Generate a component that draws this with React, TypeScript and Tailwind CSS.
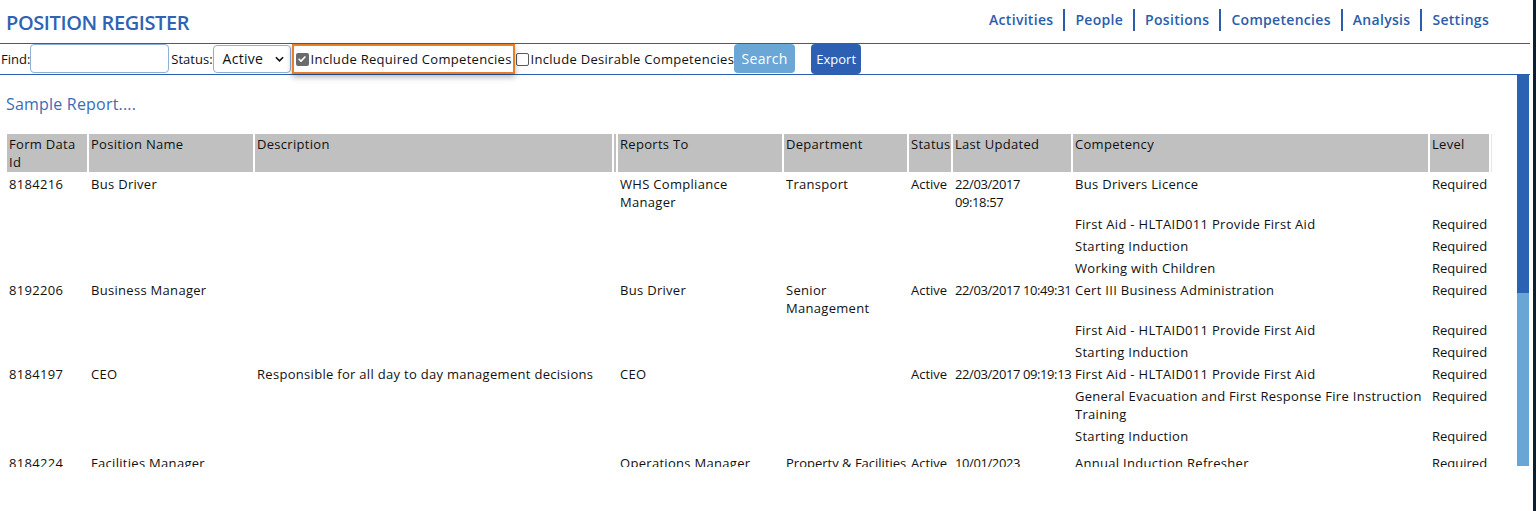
const NAV = ["Activities", "People", "Positions", "Competencies", "Analysis", "Settings"];

type Row = {
  id?: string;
  name?: string;
  desc?: string;
  reports?: string;
  dept?: string;
  status?: string;
  updated?: string[];
  comp: string;
  level: string;
  cls?: string;
};

const ROWS: Row[] = [
  { id: "8184216", name: "Bus Driver", reports: "WHS Compliance Manager", dept: "Transport", status: "Active", updated: ["22/03/2017", "09:18:57"], comp: "Bus Drivers Licence", level: "Required" },
  { comp: "First Aid - HLTAID011 Provide First Aid", level: "Required" },
  { comp: "Starting Induction", level: "Required" },
  { comp: "Working with Children", level: "Required" },
  { id: "8192206", name: "Business Manager", reports: "Bus Driver", dept: "Senior Management", status: "Active", updated: ["22/03/2017 10:49:31"], comp: "Cert III Business Administration", level: "Required" },
  { comp: "First Aid - HLTAID011 Provide First Aid", level: "Required" },
  { comp: "Starting Induction", level: "Required" },
  { id: "8184197", name: "CEO", desc: "Responsible for all day to day management decisions", reports: "CEO", status: "Active", updated: ["22/03/2017 09:19:13"], comp: "First Aid - HLTAID011 Provide First Aid", level: "Required" },
  { comp: "General Evacuation and First Response Fire Instruction Training", level: "Required" },
  { comp: "Starting Induction", level: "Required", cls: "h-[27px]" },
  { id: "8184224", name: "Facilities Manager", reports: "Operations Manager", dept: "Property & Facilities", status: "Active", updated: ["10/01/2023", "09:20:00"], comp: "Annual Induction Refresher", level: "Required" },
  { comp: "Starting Induction", level: "Required" },
];

function Check({ on }: { on: boolean }) {
  if (on) {
    return (
      <span className="w-[13px] h-[13px] rounded-[2px] bg-[#6b6b6b] flex items-center justify-center shrink-0">
        <svg viewBox="0 0 12 12" className="w-[10px] h-[10px]" fill="none" stroke="white" strokeWidth={2} strokeLinecap="round" strokeLinejoin="round">
          <path d="M2.5 6.3l2.3 2.3 4.7-5" />
        </svg>
      </span>
    );
  }
  return <span className="w-[13px] h-[13px] rounded-[2px] border border-[#5a5a5a] bg-white shrink-0" />;
}

export default function App() {
  const td = "px-[2px] pt-[3px] pb-[1px] align-top text-left";
  return (
    <div className="flex w-[1536px] h-[511px] bg-white text-[13px] leading-[18px] tracking-[0.3px] text-[#111]" style={{ fontFamily: '"Open Sans", "Liberation Sans", sans-serif' }}>
      <div className="w-[1530px] flex flex-col">
        {/* top bar */}
        <div className="h-[44px] flex items-start justify-between border-b border-[#2b5fae]">
          <h1 className="ml-[6px] mt-[9px] text-[20px] leading-[28px] font-semibold tracking-[-0.4px] text-[#2f63b4]">POSITION REGISTER</h1>
          <nav className="flex items-center mt-[9px] mr-[41px] text-[14px] leading-[22px] font-semibold tracking-[0.3px] text-[#2b5dab]">
            {NAV.map((n, i) => (
              <div key={n} className="flex items-center">
                {i > 0 && <span className="w-[2px] h-[22px] bg-[#2b5dab] mx-[10px]" />}
                <span>{n}</span>
              </div>
            ))}
          </nav>
        </div>

        {/* toolbar */}
        <div className="h-[31px] flex items-stretch border-b border-[#2b5fae]">
          <span className="ml-[1px] self-center tracking-normal">Find:</span>
          <input className="w-[139px] h-[29px] border border-[#8fb0d6] rounded-[4px] outline-none" />
          <span className="ml-[2px] self-center tracking-normal">Status:</span>
          <div className="w-[78px] h-[28px] mt-[1px] border border-[#8fb0d6] rounded-[4px] flex items-center justify-between pl-[9px] pr-[6px] text-[14px]">
            <span>Active</span>
            <svg viewBox="0 0 10 6" className="w-[9px] h-[6px]" fill="none" stroke="#111" strokeWidth={1.8}>
              <path d="M1 1l4 4 4-4" />
            </svg>
          </div>
          <div className="ml-[1px] w-[223px] h-[30px] border-2 border-[#e87d2a] shadow-[0_3px_6px_rgba(0,0,0,0.3)] flex items-center pl-[2px] gap-[2px] z-10">
            <Check on />
            <span className="whitespace-nowrap">Include Required Competencies</span>
          </div>
          <div className="flex items-center gap-[2px] ml-[1px]">
            <Check on={false} />
            <span className="whitespace-nowrap">Include Desirable Competencies</span>
          </div>
          <button className="w-[61px] h-[29px] rounded-[4px] bg-[#6aa7d7] text-white text-[14px] font-medium">Search</button>
          <button className="ml-[16px] w-[50px] h-[30px] rounded-[4px] bg-[#2d60b2] text-white text-[13px] font-medium tracking-normal">Export</button>
        </div>

        {/* content */}
        <div className="flex h-[392px]">
          <div className="flex-1 overflow-hidden pl-[5px]">
            <div className="pt-[18px] pl-[1px] text-[16px] leading-[22px] tracking-[0.2px] text-[#3a6cb7]">Sample Report....</div>
            <table className="mt-[19px] border-separate border-spacing-x-[2px] border-spacing-y-0 table-fixed w-[1489px]">
              <colgroup>
                <col className="w-[80px]" />
                <col className="w-[164px]" />
                <col className="w-[357px]" />
                <col className="w-[2px]" />
                <col className="w-[164px]" />
                <col className="w-[123px]" />
                <col className="w-[42px]" />
                <col className="w-[118px]" />
                <col className="w-[355px]" />
                <col className="w-[59px]" />
                <col className="w-[1px]" />
              </colgroup>
              <thead>
                <tr className="h-[38px]">
                  {["Form Data Id", "Position Name", "Description", "", "Reports To", "Department", "Status", "Last Updated", "Competency", "Level"].map((h, i) => (
                    <th key={i} className="bg-[#c0c0c0] font-normal align-top text-left px-[2px] py-[1px] overflow-hidden">{h}</th>
                  ))}
                  <th className="bg-[#e6e6e6] p-0" />
                </tr>
              </thead>
              <tbody>
                {ROWS.map((r, i) => (
                  <tr key={i} className={r.cls}>
                    <td className={td}>{r.id}</td>
                    <td className={td}>{r.name}</td>
                    <td className={td}>{r.desc}</td>
                    <td className="p-0" />
                    <td className={td}>{r.reports}</td>
                    <td className={`${td} ${r.dept === "Property & Facilities" ? "whitespace-nowrap tracking-normal" : ""}`}>{r.dept}</td>
                    <td className={`${td} tracking-normal`}>{r.status}</td>
                    <td className={`${td} whitespace-nowrap tracking-[-0.4px]`}>
                      {r.updated?.map((u) => (
                        <div key={u}>{u}</div>
                      ))}
                    </td>
                    <td className={td}>{r.comp}</td>
                    <td className={`${td} tracking-normal`}>{r.level}</td>
                    <td className="p-0" />
                  </tr>
                ))}
              </tbody>
            </table>
          </div>
          <div className="w-[12px] mr-[1px] flex flex-col">
            <div className="h-[218px] bg-[#2c62b4]" />
            <div className="h-[173px] bg-[#6aa6d5]" />
          </div>
        </div>
      </div>
      <div className="w-[3px]" />
      <div className="w-[3px] bg-[#0f1e2e]" />
    </div>
  );
}
